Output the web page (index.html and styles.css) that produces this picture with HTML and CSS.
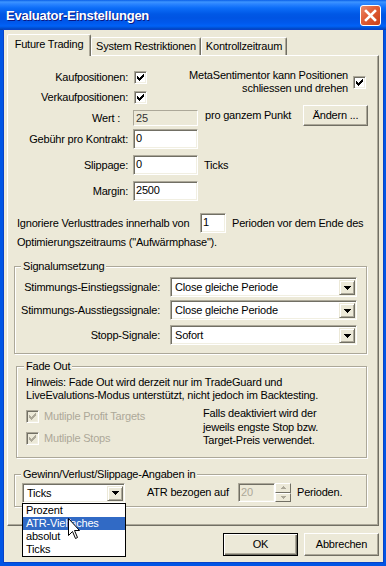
FILE: index.html
```html
<!doctype html>
<html lang="de">
<head>
	<meta charset="UTF-8">
	<title>Evaluator-Einstellungen</title>
	<link rel="stylesheet" href="styles.css">
</head>
<body>
	<div class="window">
		<div class="titlebar">
			<span class="title">Evaluator-Einstellungen</span>
			<span class="close">
				<svg width="13" height="13" viewBox="0 0 13 13"><path d="M2 2L11 11M11 2L2 11" stroke="#fff" stroke-width="2.6" stroke-linecap="square"/></svg>
			</span>
		</div>
		<div class="client">
			<div class="tabs">
				<div class="tab active">Future Trading</div>
				<div class="tab t2">System Restriktionen</div>
				<div class="tab t3">Kontrollzeitraum</div>
			</div>
			<div class="panel">
				<div class="top">
					<div class="top-row">
						<div class="checks">
							<div class="field">
								<label class="lbl">Kaufpositionen:</label>
								<span class="cb"><svg width="7" height="7" viewBox="0 0 7 7"><path d="M0 2H1V3H2V4H3V3H4V2H5V1H6V0H7V3H6V4H5V5H4V6H3V7H2V6H1V5H0Z"/></svg></span>
							</div>
							<div class="field">
								<label class="lbl">Verkaufpositionen:</label>
								<span class="cb"><svg width="7" height="7" viewBox="0 0 7 7"><path d="M0 2H1V3H2V4H3V3H4V2H5V1H6V0H7V3H6V4H5V5H4V6H3V7H2V6H1V5H0Z"/></svg></span>
							</div>
						</div>
						<div class="meta">
							<p>MetaSentimentor kann Positionen<br>schliessen und drehen</p>
							<span class="cb"><svg width="7" height="7" viewBox="0 0 7 7"><path d="M0 2H1V3H2V4H3V3H4V2H5V1H6V0H7V3H6V4H5V5H4V6H3V7H2V6H1V5H0Z"/></svg></span>
						</div>
					</div>
					<div class="row wert">
						<label class="lbl">Wert :</label>
						<span class="tb ro">25</span>
						<span class="note">pro ganzem Punkt</span>
						<span class="btn change">Ändern ...</span>
					</div>
					<div class="row gap-s">
						<label class="lbl">Gebühr pro Kontrakt:</label>
						<span class="tb">0</span>
					</div>
					<div class="row gap-m">
						<label class="lbl">Slippage:</label>
						<span class="tb">0</span>
						<span class="unit">Ticks</span>
					</div>
					<div class="row gap-m">
						<label class="lbl">Margin:</label>
						<span class="tb">2500</span>
					</div>
				</div>

				<div class="ignore">
					<div class="line">
						<span class="lead">Ignoriere Verlusttrades innerhalb von</span>
						<span class="tb small">1</span>
						<span>Perioden vor dem Ende des</span>
					</div>
					<p class="line2">Optimierungszeitraums ("Aufwärmphase").</p>
				</div>

				<fieldset class="group signal">
					<legend>Signalumsetzung</legend>
					<div class="sig-row">
						<label class="sig-lbl">Stimmungs-Einstiegssignale:</label>
						<div class="combo wide">
							<span class="combo-text">Close gleiche Periode</span>
							<span class="drop"><svg width="7" height="4" viewBox="0 0 7 4"><path d="M0 0H7V1H6V2H5V3H4V4H3V3H2V2H1V1H0Z"/></svg></span>
						</div>
					</div>
					<div class="sig-row r2">
						<label class="sig-lbl">Stimmungs-Ausstiegssignale:</label>
						<div class="combo wide">
							<span class="combo-text">Close gleiche Periode</span>
							<span class="drop"><svg width="7" height="4" viewBox="0 0 7 4"><path d="M0 0H7V1H6V2H5V3H4V4H3V3H2V2H1V1H0Z"/></svg></span>
						</div>
					</div>
					<div class="sig-row r3">
						<label class="sig-lbl">Stopp-Signale:</label>
						<div class="combo wide">
							<span class="combo-text">Sofort</span>
							<span class="drop"><svg width="7" height="4" viewBox="0 0 7 4"><path d="M0 0H7V1H6V2H5V3H4V4H3V3H2V2H1V1H0Z"/></svg></span>
						</div>
					</div>
				</fieldset>

				<fieldset class="group fade">
					<legend>Fade Out</legend>
					<p class="hint">Hinweis: Fade Out wird derzeit nur im TradeGuard und<br>LiveEvalutions-Modus unterstützt, nicht jedoch im Backtesting.</p>
					<div class="fade-opts">
						<div class="fade-left">
							<div class="opt">
								<span class="cb off"><svg width="7" height="7" viewBox="0 0 7 7"><path d="M0 2H1V3H2V4H3V3H4V2H5V1H6V0H7V3H6V4H5V5H4V6H3V7H2V6H1V5H0Z"/></svg></span>
								<span class="dim">Mutliple Profit Targets</span>
							</div>
							<div class="opt second">
								<span class="cb off"><svg width="7" height="7" viewBox="0 0 7 7"><path d="M0 2H1V3H2V4H3V3H4V2H5V1H6V0H7V3H6V4H5V5H4V6H3V7H2V6H1V5H0Z"/></svg></span>
								<span class="dim">Mutliple Stops</span>
							</div>
						</div>
						<p class="fade-note">Falls deaktiviert wird der<br>jeweils engste Stop bzw.<br>Target-Preis verwendet.</p>
					</div>
				</fieldset>

				<fieldset class="group units">
					<legend>Gewinn/Verlust/Slippage-Angaben in</legend>
					<div class="units-row">
						<div class="combo-wrap">
							<div class="combo narrow">
								<span class="combo-text">Ticks</span>
								<span class="drop"><svg width="7" height="4" viewBox="0 0 7 4"><path d="M0 0H7V1H6V2H5V3H4V4H3V3H2V2H1V1H0Z"/></svg></span>
							</div>
							<ul class="list">
								<li>Prozent</li>
								<li class="sel">ATR-Vielfaches</li>
								<li>absolut</li>
								<li>Ticks</li>
								<svg class="cursor" width="13" height="22" viewBox="0 0 13 22"><path d="M0.5 0.5V17.5L4.5 13.5L7.5 20.5L9.5 19.5L6.5 12.5H11.5Z" fill="#fff" stroke="#000" stroke-width="1"/></svg>
							</ul>
						</div>
						<span class="atr">ATR bezogen auf</span>
						<div class="spin">
							<span class="tb spin-box">20</span>
							<span class="spin-btns">
								<span class="sb"><svg width="5" height="3" viewBox="0 0 5 3"><path d="M2 0H3V1H4V2H5V3H0V2H1V1H2Z"/></svg></span>
								<span class="sb"><svg width="5" height="3" viewBox="0 0 5 3"><path d="M0 0H5V1H4V2H3V3H2V2H1V1H0Z"/></svg></span>
							</span>
						</div>
						<span class="unit">Perioden.</span>
					</div>
				</fieldset>
			</div>
			<div class="actions">
				<span class="btn default">OK</span>
				<span class="btn">Abbrechen</span>
			</div>
		</div>
	</div>
</body>
</html>
```

FILE: styles.css
```css
* {
	margin: 0;
	padding: 0;
	box-sizing: border-box;
}
body {
	width: 386px;
	height: 566px;
	overflow: hidden;
	font: 11px/13px "Liberation Sans", Arial, sans-serif;
	letter-spacing: -0.2px;
	color: #000;
}
ul {
	list-style: none;
}

.window {
	display: flex;
	flex-direction: column;
	width: 386px;
	height: 566px;
	background: #0055e5;
}
.titlebar {
	display: flex;
	align-items: center;
	justify-content: space-between;
	height: 30px;
	padding: 0 5px 0 6px;
	background: linear-gradient(to bottom, #0a5fe8 0, #3d95ff 2px, #2a84ff 4px, #0c6df8 8px, #0058e6 14px, #0054e3 18px, #0059ed 23px, #0062f7 26px, #0050d6 28px, #003ea8 30px);
}
.title {
	color: #fff;
	font: bold 13px "Liberation Sans", Arial, sans-serif;
	letter-spacing: -0.25px;
	text-shadow: 1px 1px #0a1883;
}
.close {
	display: flex;
	align-items: center;
	justify-content: center;
	width: 21px;
	height: 21px;
	border: 1px solid #fff;
	border-radius: 3px;
	background: linear-gradient(135deg, #e98b6c 0, #e2603a 40%, #c93f17 100%);
}

.client {
	flex: 1;
	margin: 0 3px 4px 4px;
	padding: 4px 4px 0 3px;
	background: #ece9d8;
	box-shadow: 0 0 0 1px #0842c8;
}

/* Registerkarten */
.tabs {
	position: relative;
	z-index: 1;
	display: flex;
	align-items: flex-end;
	height: 21px;
}
.tab {
	height: 18px;
	border: 1px solid;
	border-bottom: 0;
	border-color: #fff #716f64 transparent #fff;
	border-radius: 2px 2px 0 0;
	box-shadow: inset -1px 0 #aca899;
	text-align: center;
	line-height: 17px;
	background: #ece9d8;
}
.tab.active {
	width: 84px;
	height: 22px;
	margin-bottom: -1px;
	line-height: 19px;
}
.tab.t2 {
	width: 110px;
}
.tab.t3 {
	width: 86px;
}
.panel {
	height: 471px;
	border: 1px solid;
	border-color: #fff #716f64 #716f64 #fff;
	box-shadow: inset -1px -1px #aca899;
}

/* Eingabefelder oben */
.top {
	padding: 13px 10px 0 0;
}
.top-row {
	display: flex;
}
.field {
	display: flex;
	align-items: center;
	height: 16px;
}
.field + .field {
	margin-top: 4px;
}
.lbl {
	width: 121px;
	padding-right: 1px;
	text-align: right;
}
.cb {
	display: flex;
	align-items: center;
	justify-content: center;
	width: 13px;
	height: 13px;
	margin-left: 5px;
	border: 1px solid;
	border-color: #aca899 #fff #fff #aca899;
	box-shadow: inset 1px 1px #716f64, inset -1px -1px #f1efe2;
	background: #fff;
}
.cb.off {
	background: #ece9d8;
	fill: #aca899;
}
.meta {
	display: flex;
	align-items: flex-start;
	margin: 0 2px 0 auto;
}
.meta p {
	text-align: right;
}
.meta .cb {
	margin-top: 7px;
}
.row {
	display: flex;
	align-items: center;
}
.row.wert {
	align-items: flex-start;
	height: 21px;
}
.wert .lbl {
	padding-right: 9px;
	margin-top: 7px;
}
.gap-s {
	margin-top: 3px;
}
.gap-m {
	margin-top: 6px;
}
.tb {
	display: block;
	width: 65px;
	height: 20px;
	margin-left: 4px;
	padding-left: 2px;
	border: 1px solid;
	border-color: #aca899 #fff #fff #aca899;
	box-shadow: inset 1px 1px #716f64, inset -1px -1px #f1efe2;
	background: #fff;
	line-height: 17px;
}
.tb.ro {
	height: 16px;
	margin-top: 5px;
	background: #ece9d8;
	box-shadow: none;
	line-height: 14px;
	color: #333;
}
.note {
	margin: 4px 0 0 7px;
}
.btn {
	display: flex;
	align-items: center;
	justify-content: center;
	width: 75px;
	height: 23px;
	border: 1px solid;
	border-color: #fff #716f64 #716f64 #fff;
	box-shadow: inset -1px -1px #aca899;
	background: #ece9d8;
}
.btn.change {
	width: 65px;
	height: 21px;
	margin-left: auto;
}
.btn.default {
	border-color: #000;
	box-shadow: inset 1px 1px #fff, inset -1px -1px #716f64, inset -2px -2px #aca899;
}
.unit {
	margin-left: 6px;
}

/* Verlusttrades */
.ignore {
	margin-top: 12px;
	padding-left: 9px;
}
.ignore .line {
	display: flex;
	align-items: center;
}
.lead {
	width: 183px;
}
.tb.small {
	width: 26px;
	margin: 0 6px 0 0;
}
.line2 {
	margin-top: 3px;
}

/* Gruppen */
.group {
	width: 353px;
	margin-left: 6px;
	border: 1px solid #aca899;
	box-shadow: inset 1px 1px #fff, 1px 1px #fff;
}
.group legend {
	margin-left: 6px;
	padding: 0 2px;
	background: #ece9d8;
}
.signal {
	margin-top: 11px;
	padding-bottom: 8px;
}
.sig-row {
	display: flex;
	align-items: center;
	margin-top: 4px;
}
.sig-row.r2 {
	margin-top: 3px;
}
.sig-row.r3 {
	margin-top: 5px;
}
.sig-lbl {
	width: 145px;
	text-align: right;
}
.combo {
	display: flex;
	align-items: stretch;
	height: 20px;
	padding: 2px 1px 1px 2px;
	border: 1px solid;
	border-color: #aca899 #fff #fff #aca899;
	box-shadow: inset 1px 1px #716f64, inset -1px -1px #f1efe2;
	background: #fff;
}
.combo.wide {
	width: 187px;
	margin-left: 10px;
}
.combo.narrow {
	width: 103px;
}
.combo-text {
	flex: 1;
	padding-left: 2px;
	line-height: 15px;
}
.drop {
	display: flex;
	align-items: center;
	justify-content: center;
	width: 16px;
	border: 1px solid;
	border-color: #ece9d8 #716f64 #716f64 #ece9d8;
	box-shadow: inset 1px 1px #fff, inset -1px -1px #aca899;
	background: #ece9d8;
}

.fade {
	width: 351px;
	margin: 6px 0 0 8px;
	padding: 0 0 9px 1px;
}
.hint {
	margin: 3px 0 0 8px;
}
.fade-opts {
	display: flex;
	margin-top: 5px;
}
.fade-left {
	width: 185px;
	padding: 1px 0 0 8px;
}
.opt {
	display: flex;
	align-items: center;
	height: 16px;
}
.opt .cb {
	margin-left: 0;
}
.opt.second {
	margin-top: 6px;
}
.dim {
	margin-left: 5px;
	color: #aca899;
}
.fade-note {
	line-height: 13.5px;
}

.units {
	margin-top: 10px;
	padding-bottom: 3px;
}
.units-row {
	display: flex;
	align-items: center;
	margin-top: 2px;
}
.combo-wrap {
	position: relative;
	margin-left: 7px;
}
.list {
	position: absolute;
	top: 20px;
	left: 0;
	z-index: 10;
	width: 104px;
	border: 1px solid #000;
	background: #fff;
}
.list li {
	height: 13px;
	padding-left: 3px;
	line-height: 13px;
}
.list li.sel {
	background: #316ac5;
	color: #fff;
}
.cursor {
	position: absolute;
	left: 45px;
	top: 14px;
}
.atr {
	width: 91px;
	margin-left: 22px;
}
.spin {
	display: flex;
	height: 19px;
}
.spin-box {
	width: 37px;
	height: 19px;
	margin-left: 0;
	background: #ece9d8;
	color: #aca899;
	line-height: 16px;
}
.spin-btns {
	display: flex;
	flex-direction: column;
	width: 16px;
}
.sb {
	display: flex;
	flex: 1;
	align-items: center;
	justify-content: center;
	border: 1px solid;
	border-color: #fff #716f64 #716f64 #fff;
	background: #ece9d8;
	fill: #aca899;
}
.units .unit {
	margin-left: 6px;
}

.actions {
	display: flex;
	justify-content: flex-end;
	gap: 6px;
	margin-top: 7px;
}
```
